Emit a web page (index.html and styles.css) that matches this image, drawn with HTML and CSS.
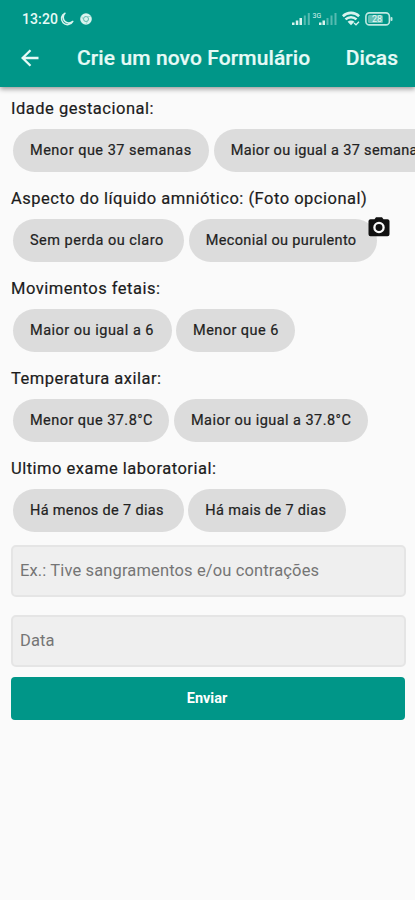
FILE: index.html
```html
<!DOCTYPE html>
<html lang="pt-BR">
<head>
    <meta charset="UTF-8">
    <meta name="viewport" content="width=device-width, initial-scale=1.0">
    <title>Crie um novo Formulário</title>
    <link rel="stylesheet" href="styles.css">
</head>
<body>
    <header class="header">
        <div class="status-bar">
            <div class="status-left">
                <span class="clock">13:20</span>
                <svg class="moon" width="14" height="14" viewBox="0 0 14 14">
                    <path d="M5 1.2A6 6 0 1 0 12.8 9.4 5.6 5.6 0 0 1 5 1.2Z" fill="none" stroke="#d9f3ee" stroke-width="1.5" stroke-linejoin="round"/>
                </svg>
                <svg class="chrome" width="12" height="12" viewBox="0 0 12 12">
                    <circle cx="6" cy="6" r="5.8" fill="#d9f3ee"/>
                    <circle cx="6" cy="6" r="2.5" fill="none" stroke="#5bb9ac" stroke-width="1"/>
                    <path d="M6 3.5h4.8M3.8 7.2 1.6 3.5M8.2 7.2 6 11" stroke="#8accc3" stroke-width=".7"/>
                </svg>
            </div>
            <div class="status-right">
                <svg width="46" height="15" viewBox="0 0 46 15">
                    <g fill="#d9f3ee">
                        <rect x="0" y="11.5" width="2.5" height="2.5"/>
                        <rect x="3.8" y="9.5" width="2.5" height="4.5"/>
                        <rect x="7.5" y="7" width="2.5" height="7"/>
                        <rect x="27" y="11.5" width="2.5" height="2.5"/>
                        <rect x="30.5" y="9.5" width="2.5" height="4.5"/>
                    </g>
                    <g fill="#d9f3ee" opacity=".4">
                        <rect x="11.8" y="4.5" width="2" height="9.5"/>
                        <rect x="15.8" y="2" width="2" height="12"/>
                        <rect x="34.5" y="7" width="2" height="7"/>
                        <rect x="38.5" y="4.5" width="2" height="9.5"/>
                        <rect x="42.5" y="2" width="2" height="12"/>
                    </g>
                    <text x="20.5" y="7" class="network">3G</text>
                </svg>
                <svg class="wifi" width="18" height="15" viewBox="0 0 18 15">
                    <g fill="none" stroke="#d9f3ee" stroke-width="2.6">
                        <path d="M.8 5.2a11.8 11.8 0 0 1 16.4 0"/>
                        <path d="M3.5 8.4a8 8 0 0 1 11 0"/>
                    </g>
                    <path d="M5.6 10.8a4.8 4.8 0 0 1 6.8 0L9 14.2Z" fill="#d9f3ee"/>
                    <path d="m12 12 2 1.8 3-3" fill="none" stroke="#d9f3ee" stroke-width="1.3"/>
                </svg>
                <svg class="battery" width="28" height="14" viewBox="0 0 28 14">
                    <rect x=".9" y=".9" width="23.5" height="12" rx="3.5" fill="none" stroke="#c0e9e2" stroke-width="1.6"/>
                    <rect x="3" y="3" width="15" height="8" rx="1.5" fill="#d9f3ee" opacity=".45"/>
                    <rect x="25.5" y="5" width="2" height="4" rx="1" fill="#c0e9e2"/>
                    <text x="7" y="10" class="percent">28</text>
                </svg>
            </div>
        </div>
        <div class="toolbar">
            <svg class="back" width="18" height="18" viewBox="0 0 18 18">
                <path d="M17.5 9H2M9.5 1.2 1.6 9l7.9 7.8" fill="none" stroke="#e6faf6" stroke-width="2.3"/>
            </svg>
            <h1 class="title">Crie um novo Formulário</h1>
            <a class="tips" href="#">Dicas</a>
        </div>
    </header>

    <form class="form">
        <section class="group">
            <h2 class="label">Idade gestacional:</h2>
            <div class="chips">
                <button type="button" class="chip">Menor que 37 semanas</button>
                <button type="button" class="chip chip-tight">Maior ou igual a 37 semanas</button>
            </div>
        </section>
        <section class="group">
            <h2 class="label">Aspecto do líquido amniótico: (Foto opcional)</h2>
            <div class="chips">
                <button type="button" class="chip chip-wide">Sem perda ou claro</button>
                <div class="chip-photo">
                    <button type="button" class="chip chip-wide chip-tight">Meconial ou purulento</button>
                    <svg class="camera" width="22" height="20" viewBox="0 0 22 20">
                        <path d="M2.5 2.2h4L8 .3h6l1.5 1.9h4A2 2 0 0 1 21.5 4v13.2a2 2 0 0 1-2 2h-17a2 2 0 0 1-2-2V4a2 2 0 0 1 2-1.8Z" fill="#111"/>
                        <circle cx="11" cy="10.5" r="4.6" fill="none" stroke="#fafafa" stroke-width="2.3"/>
                    </svg>
                </div>
            </div>
        </section>
        <section class="group">
            <h2 class="label">Movimentos fetais:</h2>
            <div class="chips">
                <button type="button" class="chip">Maior ou igual a 6</button>
                <button type="button" class="chip chip-narrow">Menor que 6</button>
            </div>
        </section>
        <section class="group">
            <h2 class="label">Temperatura axilar:</h2>
            <div class="chips">
                <button type="button" class="chip chip-narrow">Menor que 37.8°C</button>
                <button type="button" class="chip chip-narrow">Maior ou igual a 37.8°C</button>
            </div>
        </section>
        <section class="group group-last">
            <h2 class="label">Ultimo exame laboratorial:</h2>
            <div class="chips chips-days">
                <button type="button" class="chip">Há menos de 7 dias</button>
                <button type="button" class="chip">Há mais de 7 dias</button>
            </div>
        </section>

        <input type="text" class="field" placeholder="Ex.: Tive sangramentos e/ou contrações">
        <input type="text" class="field" placeholder="Data">
        <button type="button" class="submit">Enviar</button>
    </form>
</body>
</html>
```
FILE: styles.css
```css
* {
    box-sizing: border-box;
}
body {
    margin: 0;
    min-height: 100vh;
    overflow: hidden;
    background-color: #fafafa;
    color: #1c1c1c;
    font-family: Roboto, sans-serif;
}
.header {
    position: relative;
    height: 87px;
    background-color: #009688;
    color: #e6faf6;
    box-shadow: 0 2px 5px rgba(0, 0, 0, 0.4);
}
.status-bar {
    display: flex;
    justify-content: space-between;
    align-items: center;
    height: 29px;
    padding: 8px 22px 0 22px;
}
.status-left,
.status-right {
    display: flex;
    align-items: center;
}
.clock {
    font-size: 14px;
    font-weight: 500;
    letter-spacing: 0.1px;
}
.moon {
    margin-left: 2px;
}
.chrome {
    margin-left: 6px;
}
.network {
    fill: #d9f3ee;
    font-size: 7px;
}
.wifi {
    margin-left: 4px;
}
.battery {
    margin-left: 5px;
}
.percent {
    fill: #e6faf6;
    font-size: 9px;
}
.toolbar {
    display: flex;
    align-items: center;
    height: 58px;
    padding: 0 17px 0 21px;
}
.title,
.tips {
    margin: 0;
    font-size: 21px;
    font-weight: 500;
    white-space: nowrap;
    -webkit-text-stroke: 0.2px;
}
.title {
    margin-left: 38px;
    letter-spacing: 0.1px;
}
.tips {
    margin-left: auto;
    color: inherit;
    text-decoration: none;
}
.form {
    display: flex;
    flex-direction: column;
    padding: 10px 9px 0 11px;
}
.group {
    height: 90px;
}
.group-last {
    height: 88px;
}
.label {
    margin: 0;
    font-size: 16.5px;
    font-weight: 400;
    line-height: 24px;
    letter-spacing: 0.5px;
    white-space: nowrap;
    -webkit-text-stroke: 0.2px;
}
.chips {
    display: flex;
    gap: 4.5px;
    padding: 8px 0 0 2px;
}
.chip {
    flex: none;
    height: 43px;
    padding: 0 17.5px 0 17px;
    border: 0;
    border-radius: 22px;
    background-color: #dcdcdc;
    color: #222;
    font-family: inherit;
    font-size: 14.5px;
    letter-spacing: 0.5px;
    white-space: nowrap;
    -webkit-text-stroke: 0.2px;
}
.chip-wide {
    padding-right: 20.5px;
}
.chip-narrow {
    padding-right: 16.5px;
    letter-spacing: 0.45px;
}
.chip-tight {
    letter-spacing: 0.33px;
}
.chips-days .chip {
    padding-right: 20px;
    letter-spacing: 0.33px;
}
.chip-photo {
    position: relative;
}
.camera {
    position: absolute;
    top: -2px;
    right: -13px;
}
.field {
    height: 52px;
    margin: 0 0 18px;
    padding: 0 7px 1px;
    border: 2px solid #e5e5e5;
    border-radius: 5px;
    background-color: #efefef;
    font-family: inherit;
    font-size: 16.5px;
    letter-spacing: 0.13px;
}
.field::placeholder {
    color: #757575;
}
.submit {
    height: 43px;
    margin: -8px 1px 0 0;
    padding: 0 8px 0 6px;
    border: 0;
    border-radius: 4px;
    background-color: #009688;
    color: #fff;
    font-family: inherit;
    font-size: 14.5px;
    font-weight: 700;
}
```
